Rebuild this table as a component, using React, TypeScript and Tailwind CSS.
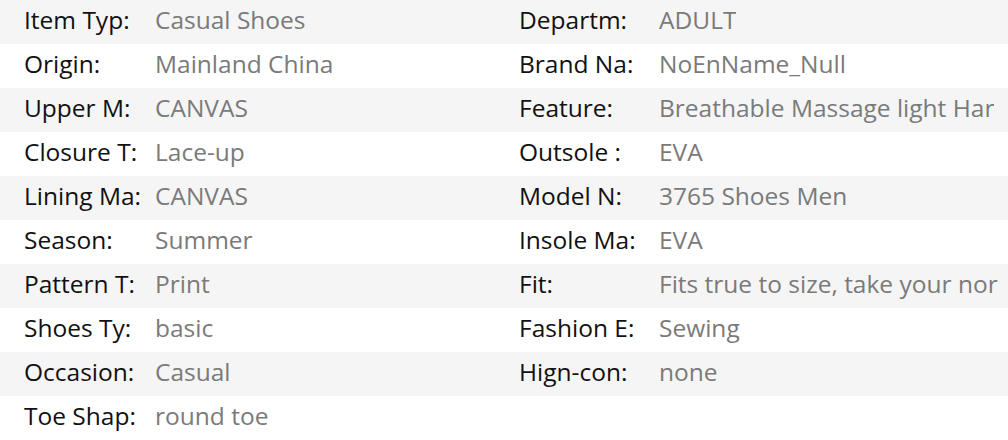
const rows: [string, string, string?, string?][] = [
  ['Item Typ:', 'Casual Shoes', 'Departm:', 'ADULT'],
  ['Origin:', 'Mainland China', 'Brand Na:', 'NoEnName_Null'],
  ['Upper M:', 'CANVAS', 'Feature:', 'Breathable Massage light Har'],
  ['Closure T:', 'Lace-up', 'Outsole :', 'EVA'],
  ['Lining Ma:', 'CANVAS', 'Model N:', '3765 Shoes Men'],
  ['Season:', 'Summer', 'Insole Ma:', 'EVA'],
  ['Pattern T:', 'Print', 'Fit:', 'Fits true to size, take your nor'],
  ['Shoes Ty:', 'basic', 'Fashion E:', 'Sewing'],
  ['Occasion:', 'Casual', 'Hign-con:', 'none'],
  ['Toe Shap:', 'round toe'],
];

const Cell = ({ label, value, labelW }: { label?: string; value?: string; labelW: string }) => (
  <div className="flex min-w-0 items-center overflow-hidden whitespace-nowrap pb-[3px]">
    <span className={`${labelW} shrink-0 text-[#111]`}>{label}</span>
    <span className="text-[#7a7a7a]">{value}</span>
  </div>
);

export default function App() {
  return (
    <div className="w-[1008px] overflow-hidden bg-white text-[24.5px] font-['Open_Sans',sans-serif]">
      {rows.map(([l1, v1, l2, v2], i) => (
        <div
          key={i}
          className={`grid h-[44px] grid-cols-[519px_489px] ${i % 2 === 0 ? 'bg-[#f5f5f5]' : 'bg-white'}`}
        >
          <div className="pl-[24px] flex min-w-0">
            <Cell label={l1} value={v1} labelW="w-[131px]" />
          </div>
          <div className="flex min-w-0">
            <Cell label={l2} value={v2} labelW="w-[140px]" />
          </div>
        </div>
      ))}
    </div>
  );
}
